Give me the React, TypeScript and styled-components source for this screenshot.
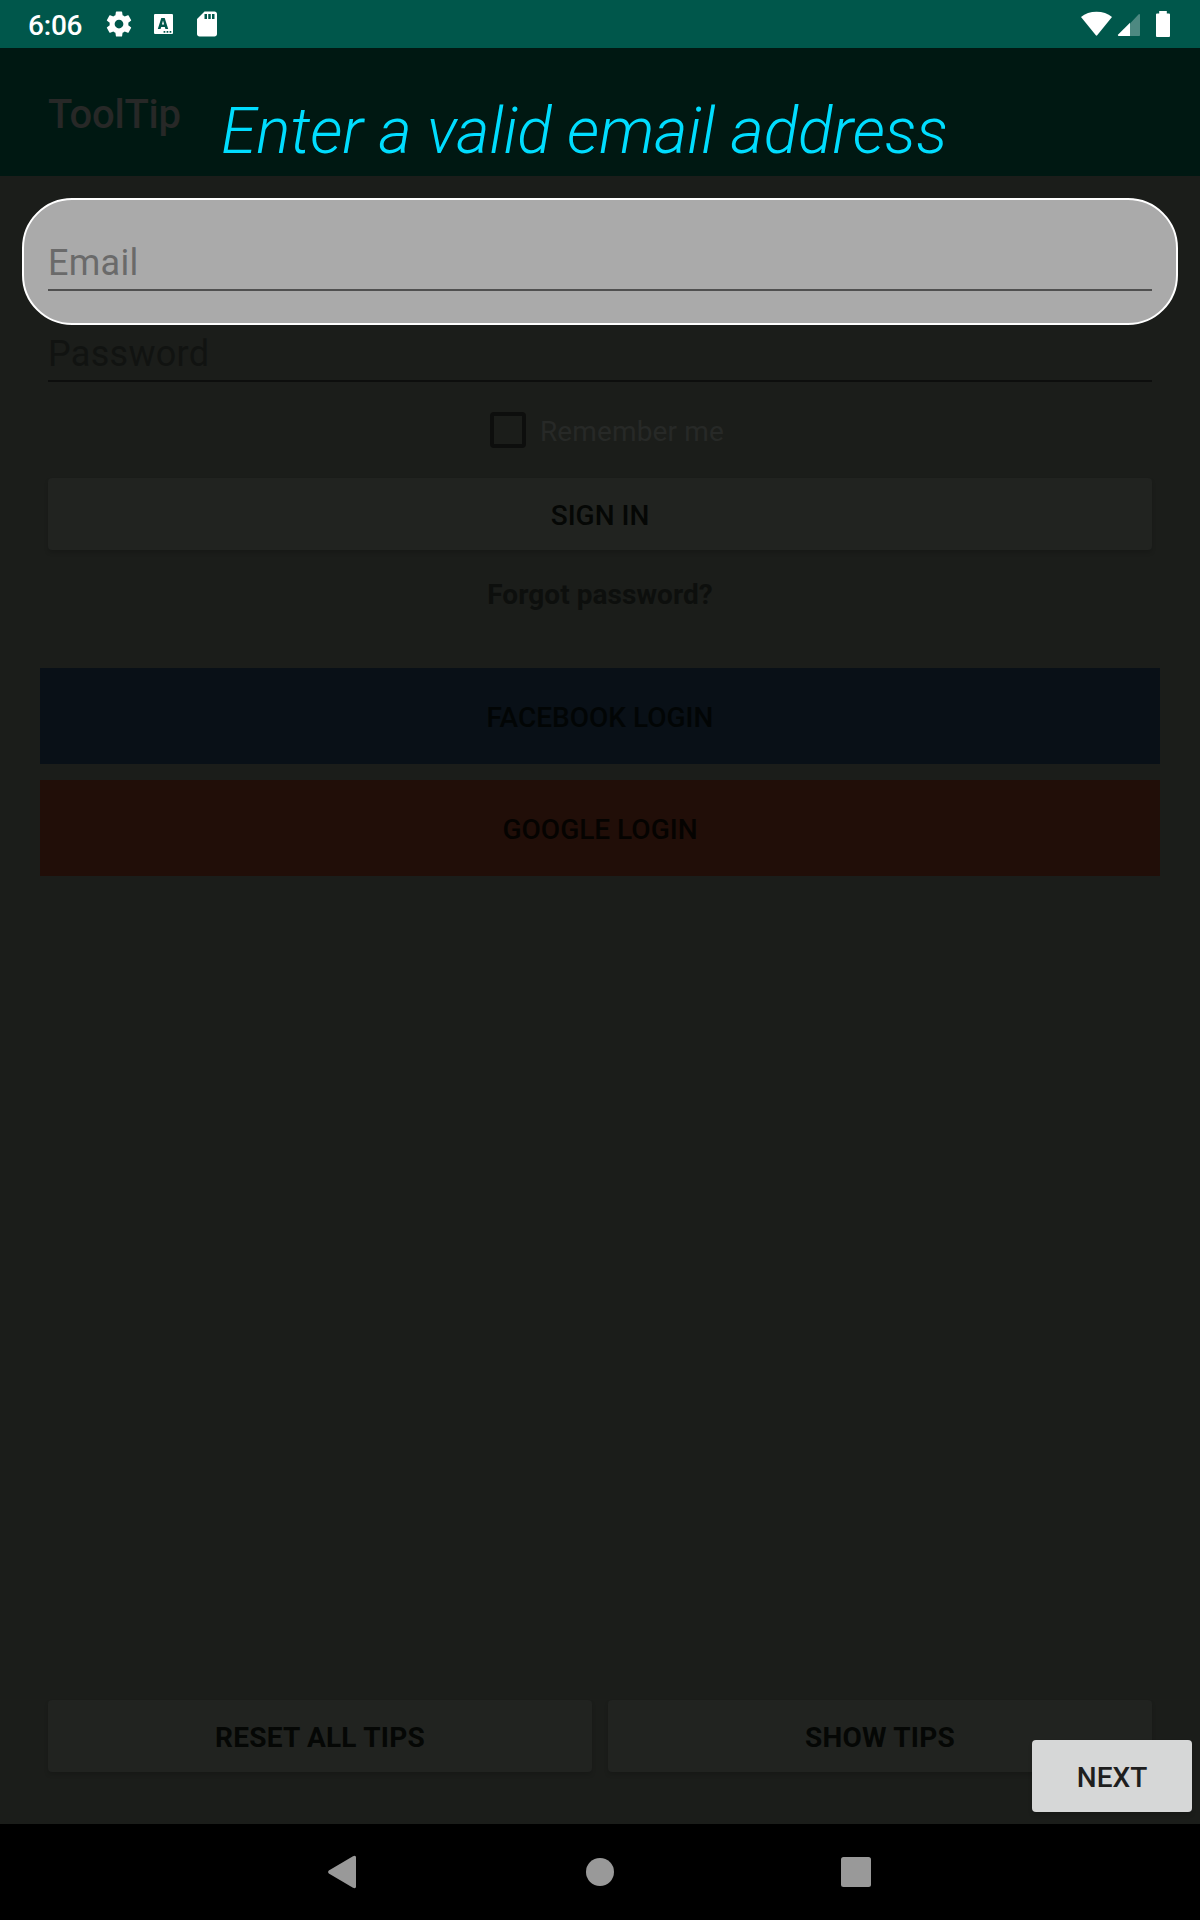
import React from 'react';
import styled, { createGlobalStyle } from 'styled-components';

const GlobalStyle = createGlobalStyle`
  * { box-sizing: border-box; }
  body { margin: 0; background: #000; }
`;

const Screen = styled.div`
  display: flex;
  flex-direction: column;
  position: relative;
  width: 1200px;
  height: 1920px;
  overflow: hidden;
  background: #1b1d1a;
  font-family: Roboto, 'Noto Sans', sans-serif;
`;

const StatusBar = styled.header`
  display: flex;
  justify-content: space-between;
  height: 48px;
  padding: 0 28px;
  background: #00574b;
  color: #fff;
`;

const StatusGroup = styled.div`
  display: flex;
  align-items: center;
`;

const Clock = styled.span`
  width: 76px;
  padding-top: 3px;
  font-size: 28px;
  line-height: 34px;
  font-weight: 500;
  letter-spacing: -0.2px;
`;

const StatusIcon = styled.svg<{ $gap?: number }>`
  display: block;
  width: 30px;
  height: 30px;
  margin-right: ${(p) => p.$gap ?? 0}px;
  fill: #fff;
`;

const SignalIcons = styled.svg`
  display: block;
  width: 92px;
  height: 48px;
  fill: #fff;
`;

const AppBar = styled.div`
  display: flex;
  align-items: center;
  height: 128px;
  padding: 6px 48px 0;
  background: #001812;
`;

const AppTitle = styled.h1`
  margin: 0;
  color: #272827;
  font-size: 40px;
  line-height: 48px;
  font-weight: 500;
  letter-spacing: -0.2px;
`;

const TipText = styled.p`
  position: absolute;
  left: 221px;
  top: 94px;
  margin: 0;
  color: #00ddff;
  font-size: 64px;
  line-height: 76px;
  font-weight: 300;
  font-style: italic;
  letter-spacing: -0.07px;
  white-space: nowrap;
`;

const Content = styled.main`
  display: flex;
  flex: 1;
  flex-direction: column;
  padding: 22px 0 52px;
`;

const Highlight = styled.div`
  height: 127px;
  margin: 0 22px 8px;
  padding: 42px 24px 0;
  border: 2px solid #fff;
  border-radius: 50px;
  background: #aaa;
`;

const Field = styled.div<{ $ink: string; $line: string }>`
  height: 49px;
  border-bottom: 2px solid ${(p) => p.$line};
  color: ${(p) => p.$ink};
  font-size: 36px;
  line-height: 42px;
  letter-spacing: 0.28px;
`;

const Form = styled.div`
  display: flex;
  flex-direction: column;
  padding: 0 48px;
`;

const CheckRow = styled.label`
  display: flex;
  align-items: center;
  justify-content: center;
  gap: 14px;
  height: 36px;
  margin: 30px 0;
  padding-left: 14px;
  color: #272927;
  font-size: 28px;
  line-height: 32px;
  letter-spacing: 0.15px;
`;

const CheckBox = styled.span`
  width: 36px;
  height: 36px;
  border: 4px solid #0d0e0d;
  border-radius: 4px;
`;

const CheckLabel = styled.span`
  padding-top: 3px;
`;

const Button = styled.button<{ $bold?: boolean }>`
  display: flex;
  flex: 1;
  align-items: center;
  justify-content: center;
  height: 72px;
  min-height: 72px;
  padding: 3px 0 0;
  border: 0;
  border-radius: 4px;
  background: #212320;
  box-shadow: 0 3px 4px rgba(0, 0, 0, 0.14);
  color: #050705;
  font-family: inherit;
  font-size: 28px;
  line-height: 32px;
  font-weight: ${(p) => (p.$bold ? 700 : 500)};
  letter-spacing: ${(p) => (p.$bold ? '0.22px' : 'normal')};
`;

const ForgotLink = styled.div`
  margin-top: 29px;
  height: 32px;
  color: #0d0f0d;
  font-size: 28px;
  line-height: 32px;
  font-weight: 700;
  letter-spacing: 0.06px;
  text-align: center;
`;

const SocialList = styled.div`
  display: flex;
  flex-direction: column;
  gap: 16px;
  margin: 57px 40px 0;
`;

const SocialButton = styled(Button)<{ $fill: string; $ink: string }>`
  flex: none;
  height: 96px;
  border-radius: 0;
  background: ${(p) => p.$fill};
  box-shadow: none;
  color: ${(p) => p.$ink};
`;

const TipActions = styled.div`
  display: flex;
  gap: 16px;
  margin-top: auto;
  padding: 0 48px;
`;

const NextButton = styled(Button)`
  position: absolute;
  right: 8px;
  bottom: 108px;
  width: 160px;
  background: #d6d7d7;
  color: #1e1e1e;
`;

const NavBar = styled.nav`
  display: flex;
  align-items: center;
  justify-content: center;
  gap: 208px;
  height: 96px;
  background: #000;
`;

const NavIcon = styled.svg`
  display: block;
  width: 48px;
  height: 48px;
  fill: #999;
`;

export default function App() {
  return (
    <Screen>
      <GlobalStyle />
      <StatusBar>
        <StatusGroup>
          <Clock>6:06</Clock>
          <StatusIcon viewBox="0 0 24 24" $gap={14}>
            <path d="M19.43 12.98c.04-.32.07-.64.07-.98s-.03-.66-.07-.98l2.11-1.65c.19-.15.24-.42.12-.64l-2-3.46c-.12-.22-.39-.3-.61-.22l-2.49 1c-.52-.4-1.08-.73-1.69-.98l-.38-2.65C14.46 2.18 14.25 2 14 2h-4c-.25 0-.46.18-.49.42l-.38 2.65c-.61.25-1.17.59-1.69.98l-2.49-1c-.23-.09-.49 0-.61.22l-2 3.46c-.13.22-.07.49.12.64l2.11 1.65c-.04.32-.07.65-.07.98s.03.66.07.98l-2.11 1.65c-.19.15-.24.42-.12.64l2 3.46c.12.22.39.3.61.22l2.49-1c.52.4 1.08.73 1.69.98l.38 2.65c.03.24.24.42.49.42h4c.25 0 .46-.18.49-.42l.38-2.65c.61-.25 1.17-.59 1.69-.98l2.49 1c.23.09.49 0 .61-.22l2-3.46c.12-.22.07-.49-.12-.64l-2.11-1.65zM12 15.5c-1.93 0-3.5-1.57-3.5-3.5s1.57-3.5 3.5-3.5 3.5 1.57 3.5 3.5-1.57 3.5-3.5 3.5z" />
          </StatusIcon>
          <StatusIcon viewBox="0 0 30 30" $gap={14}>
            <path
              fillRule="evenodd"
              d="M6.7 5h17.6l.7.7v18.6l-.7.7H6.7l-.7-.7V5.7zM13.300 9l-3.500 11h2.800l.6-2h3.600l.6 2h2.800L16.700 9zM15 11.600l1.100 4h-2.200zM15.600 22v1.700h1.700V22zm3 0v1.700h1.700V22zm3 0v1.700h1.700V22z"
            />
          </StatusIcon>
          <StatusIcon viewBox="0 0 24 24">
            <path d="M18 2h-8L4.020 8 4 20c0 1.100.9 2 2 2h12c1.100 0 2-.9 2-2V4c0-1.100-.9-2-2-2zm-6 6h-2V4h2v4zm3 0h-2V4h2v4zm3 0h-2V4h2v4z" />
          </StatusIcon>
        </StatusGroup>
        <StatusGroup>
          <SignalIcons viewBox="1080 0 92 48">
            <path d="M1081 17C1085 13.400 1090.500 11.700 1096.500 11.700S1108 13.400 1112 17L1097.200 35.300Q1096.500 36 1095.800 35.300Z" />
            <path d="M1140 14.500V35.200Q1140 36 1139.200 36H1130V23.500L1138.700 14.300Q1139.700 13.500 1140 14.500Z" opacity="0.3" />
            <path d="M1130 22.800V36H1118.600Q1117.400 35.700 1118.200 34.500Z" />
            <path d="M1159.200 11H1166.800V13.500H1169Q1170 13.500 1170 14.500V36Q1170 37 1169 37H1157Q1156 37 1156 36V14.500Q1156 13.500 1157 13.500H1159.200Z" />
          </SignalIcons>
        </StatusGroup>
      </StatusBar>

      <AppBar>
        <AppTitle>ToolTip</AppTitle>
      </AppBar>
      <TipText>Enter a valid email address</TipText>

      <Content>
        <Highlight>
          <Field $ink="#6a6a6a" $line="#505050">Email</Field>
        </Highlight>
        <Form>
          <Field $ink="#111311" $line="#0d0e0d">Password</Field>
          <CheckRow>
            <CheckBox />
            <CheckLabel>Remember me</CheckLabel>
          </CheckRow>
          <Button>SIGN IN</Button>
          <ForgotLink>Forgot password?</ForgotLink>
        </Form>
        <SocialList>
          <SocialButton $fill="#091017" $ink="#020505">FACEBOOK LOGIN</SocialButton>
          <SocialButton $fill="#210e08" $ink="#050301">GOOGLE LOGIN</SocialButton>
        </SocialList>
        <TipActions>
          <Button $bold>RESET ALL TIPS</Button>
          <Button $bold>SHOW TIPS</Button>
        </TipActions>
      </Content>
      <NextButton>NEXT</NextButton>

      <NavBar>
        <NavIcon viewBox="0 0 48 48">
          <path d="M8.800 22.500L33 8.300Q36 7 36 9.500V38.500Q36 41 33 39.700L8.800 25.500Q7.200 24 8.800 22.500Z" />
        </NavIcon>
        <NavIcon viewBox="0 0 48 48">
          <circle cx="24" cy="24" r="14" />
        </NavIcon>
        <NavIcon viewBox="0 0 48 48">
          <rect x="9" y="9" width="30" height="30" rx="2.500" />
        </NavIcon>
      </NavBar>
    </Screen>
  );
}
